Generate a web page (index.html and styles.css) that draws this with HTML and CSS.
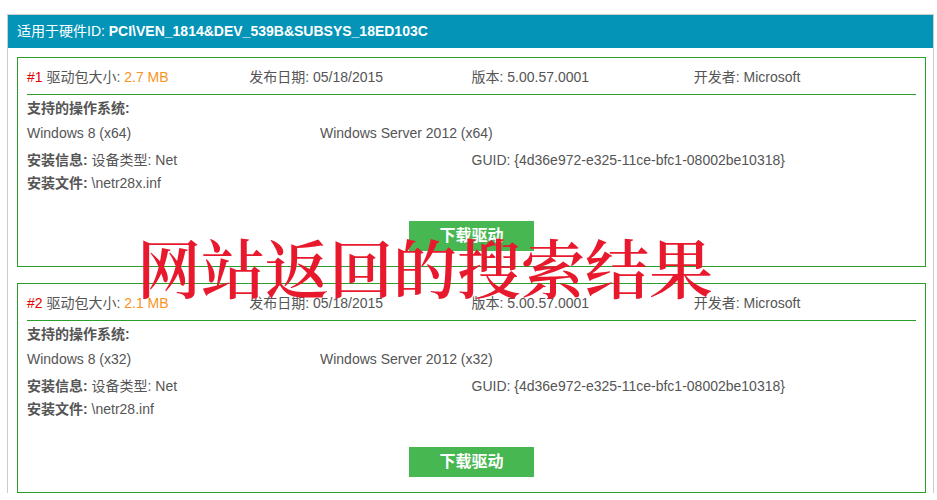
FILE: index.html
```html
<!DOCTYPE html>
<html lang="zh-CN">
<head>
  <meta charset="UTF-8" />
  <title>驱动搜索结果</title>
  <link rel="stylesheet" href="styles.css">
</head>
<body>
  <div class="panel">
    <div class="panel-head">适用于硬件ID: <b>PCI\VEN_1814&amp;DEV_539B&amp;SUBSYS_18ED103C</b></div>
    <div class="panel-body">

      <div class="driver">
        <div class="driver-meta">
          <span><em class="num">#1</em> 驱动包大小: <em class="size">2.7 MB</em></span>
          <span>发布日期: 05/18/2015</span>
          <span>版本: 5.00.57.0001</span>
          <span>开发者: Microsoft</span>
        </div>
        <div class="label">支持的操作系统:</div>
        <div class="os-list">
          <span>Windows 8 (x64)</span>
          <span>Windows Server 2012 (x64)</span>
        </div>
        <div class="info-row">
          <span><b class="label">安装信息:</b> 设备类型: Net</span>
          <span>GUID: {4d36e972-e325-11ce-bfc1-08002be10318}</span>
        </div>
        <div class="info-row">
          <span><b class="label">安装文件:</b> \netr28x.inf</span>
        </div>
        <div class="actions"><a class="btn" href="#">下载驱动</a></div>
      </div>

      <div class="driver">
        <div class="driver-meta">
          <span><em class="num">#2</em> 驱动包大小: <em class="size">2.1 MB</em></span>
          <span>发布日期: 05/18/2015</span>
          <span>版本: 5.00.57.0001</span>
          <span>开发者: Microsoft</span>
        </div>
        <div class="label">支持的操作系统:</div>
        <div class="os-list">
          <span>Windows 8 (x32)</span>
          <span>Windows Server 2012 (x32)</span>
        </div>
        <div class="info-row">
          <span><b class="label">安装信息:</b> 设备类型: Net</span>
          <span>GUID: {4d36e972-e325-11ce-bfc1-08002be10318}</span>
        </div>
        <div class="info-row">
          <span><b class="label">安装文件:</b> \netr28.inf</span>
        </div>
        <div class="actions"><a class="btn" href="#">下载驱动</a></div>
      </div>

    </div>
  </div>

  <!-- annotation stamped over the screenshot -->
  <div class="note">网站返回的搜索结果</div>
</body>
</html>
```

FILE: styles.css
```css
body {
  margin: 0;
  background: #fff;
  font-family: "Liberation Sans", "Noto Sans CJK SC", Arial, sans-serif;
  font-size: 14px;
  color: #555;
  position: relative;
  overflow: hidden;
  height: 500px;
}

.panel {
  margin: 14px 3px 0 7px;
  border: 1px solid #ccc;
  border-bottom: none;
}

.panel-head {
  height: 33px;
  line-height: 33px;
  padding-left: 9px;
  background: #0394b8;
  color: #fff;
}

.panel-head b {
  font-weight: bold;
}

.panel-body {
  padding: 9px 7px 0 9px;
}

.driver {
  border: 1px solid #2a9f2a;
  padding: 9px 9px 15px 9px;
  margin-bottom: 16px;
  line-height: 20px;
}

.driver-meta {
  display: grid;
  grid-template-columns: repeat(4, 1fr);
  padding-bottom: 7px;
  border-bottom: 1px solid #2a9f2a;
  margin-bottom: 3px;
}

.driver em {
  font-style: normal;
}

.num {
  color: #e60000;
}

.size {
  color: #f7931e;
}

.label {
  font-weight: bold;
  color: #555;
}

.os-list {
  display: grid;
  grid-template-columns: 293px 1fr;
  padding: 5px 0 7px;
}

.info-row {
  display: grid;
  grid-template-columns: 1fr 1fr;
  margin-bottom: 3px;
}

.actions {
  display: flex;
  justify-content: center;
  margin-top: 28px;
}

.btn {
  display: block;
  width: 125px;
  height: 30px;
  line-height: 30px;
  text-align: center;
  background: #47b752;
  color: #fff;
  font-size: 16px;
  font-weight: bold;
  text-decoration: none;
}

.note {
  position: absolute;
  left: 137px;
  top: 233px;
  font-family: "Noto Serif CJK SC", "Noto Sans CJK SC", serif;
  font-size: 64px;
  line-height: 64px;
  font-weight: 600;
  color: #e8192c;
  white-space: nowrap;
}
```
